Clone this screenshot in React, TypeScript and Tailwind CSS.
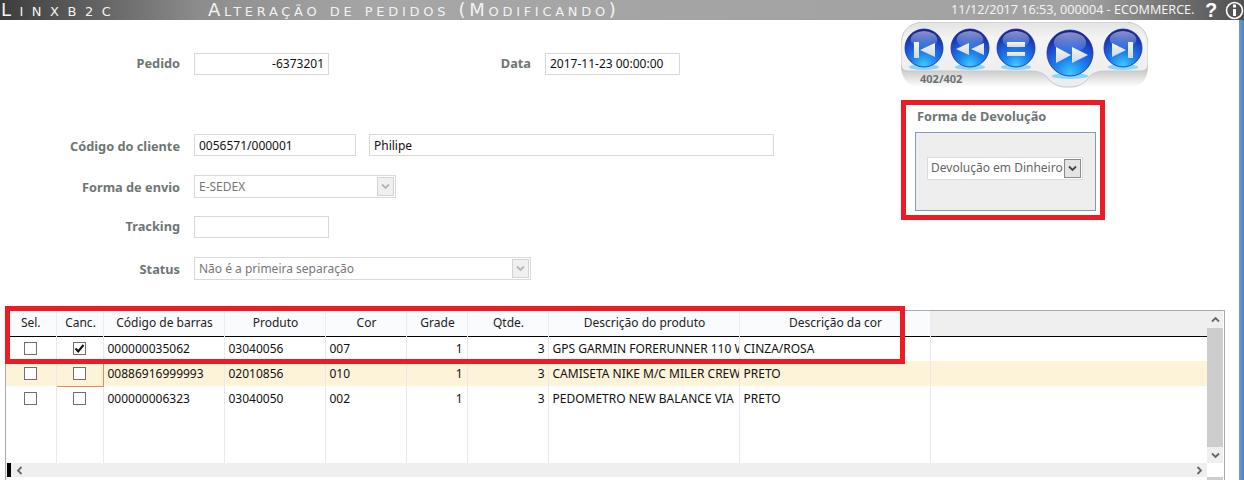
import type { ReactNode } from 'react'

const font = "font-['Noto_Sans','Liberation_Sans',sans-serif]"

type Item = { sel: boolean; barcode: string; product: string; color: string; grade: string; qty: string; name: string; colorName: string }

const items: Item[] = [
  { sel: true, barcode: '000000035062', product: '03040056', color: '007', grade: '1', qty: '3', name: 'GPS GARMIN FORERUNNER 110 WHITE', colorName: 'CINZA/ROSA' },
  { sel: false, barcode: '00886916999993', product: '02010856', color: '010', grade: '1', qty: '3', name: 'CAMISETA NIKE M/C MILER CREW', colorName: 'PRETO' },
  { sel: false, barcode: '000000006323', product: '03040050', color: '002', grade: '1', qty: '3', name: 'PEDOMETRO NEW BALANCE VIA', colorName: 'PRETO' },
]

const headers = ['Sel.', 'Canc.', 'Código de barras', 'Produto', 'Cor', 'Grade', 'Qtde.', 'Descrição do produto', 'Descrição da cor']

function Ball({ cx, cy, r, children }: { cx: number; cy: number; r: number; children: ReactNode }) {
  return (
    <g>
      <ellipse cx={cx} cy={cy + r} rx={r * 0.8} ry={3} fill="#8ad6fa" />
      <circle cx={cx} cy={cy} r={r} fill="url(#ball)" stroke="#1a2f9c" strokeWidth="0.8" />
      <ellipse cx={cx} cy={cy - r * 0.45} rx={r * 0.7} ry={r * 0.45} fill="url(#gloss)" />
      <g fill="url(#glyph)">{children}</g>
    </g>
  )
}

// botões de navegação entre pedidos
function NavWidget() {
  return (
    <svg width="247" height="66" viewBox="0 0 247 66" className="block">
      <defs>
        <radialGradient id="ball" cx="50%" cy="95%" r="90%">
          <stop offset="0%" stopColor="#3fc8fc" />
          <stop offset="35%" stopColor="#1d86ee" />
          <stop offset="70%" stopColor="#1c4fd0" />
          <stop offset="100%" stopColor="#17228f" />
        </radialGradient>
        <linearGradient id="gloss" x1="0" y1="0" x2="0" y2="1">
          <stop offset="0%" stopColor="#ffffff" stopOpacity="0.5" />
          <stop offset="100%" stopColor="#ffffff" stopOpacity="0.05" />
        </linearGradient>
        <linearGradient id="glyph" x1="0" y1="0" x2="0" y2="1">
          <stop offset="0%" stopColor="#f4f4f6" />
          <stop offset="100%" stopColor="#d4d8e0" />
        </linearGradient>
        <linearGradient id="base" x1="0" y1="0" x2="0" y2="1">
          <stop offset="0%" stopColor="#bdbdbd" />
          <stop offset="100%" stopColor="#ffffff" />
        </linearGradient>
        <linearGradient id="panel" x1="0" y1="0" x2="0" y2="1">
          <stop offset="0%" stopColor="#e2e2e2" />
          <stop offset="25%" stopColor="#f4f4f4" />
          <stop offset="100%" stopColor="#ececec" />
        </linearGradient>
      </defs>
      <path d="M0 44 H247 V46 Q246 62 232 65 H15 Q2 62 0 46 Z" fill="url(#base)" />
      <path d="M22 0 H225 Q247 2 247 24 V42 Q247 49 240 49 H202 Q190 50 186 58 Q178 66 168 65 Q156 66 148 58 Q144 50 132 49 H7 Q0 49 0 42 V24 Q0 2 22 0 Z" fill="url(#panel)" stroke="#c9c9c9" strokeWidth="1" />
      <Ball cx={23} cy={26} r={19}>
        <rect x="13" y="20" width="5" height="16" />
        <path d="M19 28 L34 21 V35 Z" />
      </Ball>
      <Ball cx={69} cy={26} r={19}>
        <path d="M55 27 L68 21 V33 Z M70 27 L83 21 V33 Z" />
      </Ball>
      <Ball cx={115} cy={26} r={19}>
        <rect x="106" y="20" width="18" height="5" />
        <rect x="106" y="30" width="18" height="4" />
      </Ball>
      <Ball cx={169} cy={31} r={23}>
        <path d="M155 25 L170 33 L155 41 Z M171 25 L187 33 L171 41 Z" />
      </Ball>
      <Ball cx={222} cy={26} r={19}>
        <path d="M211 21 L225 28 L211 35 Z" />
        <rect x="227" y="20" width="5" height="16" />
      </Ball>
      <text x="19" y="61" fontSize="11" fontWeight="700" fill="#6c7370" className={font}>402/402</text>
    </svg>
  )
}

function Chevron({ up, className }: { up?: boolean; className?: string }) {
  return (
    <svg width="9" height="7" viewBox="0 0 9 7" className={className}>
      <path d={up ? 'M1 5.5 L4.5 2 L8 5.5' : 'M1 1.5 L4.5 5 L8 1.5'} fill="none" stroke="currentColor" strokeWidth="1.8" />
    </svg>
  )
}

function Check({ checked }: { checked?: boolean }) {
  return (
    <span className="flex h-[13px] w-[13px] items-center justify-center border border-[#707070] bg-white">
      {checked && (
        <svg width="11" height="11" viewBox="0 0 11 11">
          <path d="M1.5 5.5 L4.2 8.5 L9.5 2" fill="none" stroke="#111" strokeWidth="2" />
        </svg>
      )}
    </span>
  )
}

function Field({ label, labelClass, children }: { label: string; labelClass?: string; children: ReactNode }) {
  return (
    <div className="flex items-center">
      <label className={`w-[180px] text-right text-[12.75px] font-bold text-[#6e7674] ${labelClass ?? ''}`}>{label}</label>
      <div className="ml-[14px] flex">{children}</div>
    </div>
  )
}

function TextBox({ value, className }: { value: string; className: string }) {
  return (
    <div className={`flex h-[22px] items-center overflow-hidden border border-[#d9d9d9] bg-white px-1 text-[12px] text-[#111] ${className}`}>
      {value}
    </div>
  )
}

function DisabledSelect({ value, className }: { value: string; className: string }) {
  return (
    <div className={`flex h-[23px] items-center justify-between border border-[#d9d9d9] bg-white pl-1 pr-[1px] text-[12px] text-[#777] ${className}`}>
      <span>{value}</span>
      <span className="flex h-[19px] w-[17px] items-center justify-center border border-[#d4d4d4] bg-[#f0f0f0] text-[#b5b5b5]">
        <Chevron />
      </span>
    </div>
  )
}

export default function App() {
  return (
    <div className={`flex h-[480px] w-[1244px] flex-col overflow-hidden bg-white ${font}`}>
      {/* barra de título */}
      <div className="flex h-5 shrink-0 items-center bg-[linear-gradient(90deg,#3c3c3c_0%,#8c8c8c_16%,#a6a6a6_30%,#a2a2a2_87%,#4e4e4e_100%)] text-[#f2f2f2]">
        <span className="w-[208px] pl-[1px] font-['DejaVu_Sans',sans-serif] text-[18px] leading-none tracking-[8.5px] whitespace-nowrap [font-variant-caps:small-caps]">
          Linxb<span className="text-[13px]">2</span>c
        </span>
        <span className="w-[743px] font-['DejaVu_Sans',sans-serif] text-[18px] leading-none tracking-[3.7px] whitespace-nowrap [font-variant-caps:small-caps]">Alteração de pedidos (Modificando)</span>
        <span className="w-[254px] text-[12.6px] whitespace-nowrap">11/12/2017 16:53, 000004 - ECOMMERCE.</span>
        <span className="w-[20px] font-['Liberation_Sans',sans-serif] text-[20px] leading-none font-bold text-white">?</span>
        <svg width="19" height="19" viewBox="0 0 19 19" className="shrink-0">
          <circle cx="9.5" cy="9.5" r="8" fill="none" stroke="#fff" strokeWidth="1.6" />
          <rect x="8" y="8" width="3" height="7" fill="#fff" />
          <rect x="8" y="3.5" width="3" height="3" fill="#fff" />
        </svg>
      </div>

      <div className="flex min-h-0 flex-1">
        <div className="flex w-[1239px] flex-col">
          <div className="flex h-[290px] shrink-0">
            {/* formulário */}
            <div className="flex w-[901px] flex-col pt-[33px]">
              <div className="flex h-[22px] items-center">
                <Field label="Pedido">
                  <TextBox value="-6373201" className="w-[135px] justify-end" />
                </Field>
                <span className="ml-[171px] w-[31px] text-right text-[12.75px] font-bold text-[#6e7674]">Data</span>
                <TextBox value="2017-11-23 00:00:00" className="ml-[14px] w-[135px]" />
              </div>
              <div className="mt-[59px]">
                <Field label="Código do cliente" labelClass="translate-y-[2px]">
                  <TextBox value="0056571/000001" className="w-[162px] pt-[2px]" />
                  <TextBox value="Philipe" className="ml-[13px] w-[405px] pt-[2px]" />
                </Field>
              </div>
              <div className="mt-[19px]">
                <Field label="Forma de envio" labelClass="translate-y-[1px]">
                  <DisabledSelect value="E-SEDEX" className="w-[202px]" />
                </Field>
              </div>
              <div className="mt-[18px]">
                <Field label="Tracking">
                  <TextBox value="" className="w-[135px]" />
                </Field>
              </div>
              <div className="mt-[19px]">
                <Field label="Status" labelClass="translate-y-[1px]">
                  <DisabledSelect value="Não é a primeira separação" className="w-[337px]" />
                </Field>
              </div>
            </div>

            {/* navegação e forma de devolução */}
            <div className="flex flex-col pt-[2px]">
              <NavWidget />
              <div className="mt-3 h-[120px] w-[204px] border-[5px] border-[#ed1c24]">
                <div className="pl-[11px] pt-[3px] text-[12.75px] leading-[17px] font-bold text-[#6e7674]">Forma de Devolução</div>
                <div className="ml-[9px] mt-[7px] flex h-[79px] w-[181px] items-center border border-[#7f9db9] bg-[#eeeeee] pb-[7px] pl-[11px]">
                  <div className="flex h-[23px] w-[156px] items-center justify-between border border-[#dcdcdc] bg-white pl-[3px] pr-[1px] text-[12px] whitespace-nowrap text-[#666]">
                    <span>Devolução em Dinheiro</span>
                    <span className="flex h-[19px] w-[17px] items-center justify-center border border-[#8a8a8a] bg-[#e4e4e4] text-[#444]">
                      <Chevron />
                    </span>
                  </div>
                </div>
              </div>
            </div>
          </div>

          {/* grade de itens */}
          <div className="relative ml-[5px] flex h-[170px] w-[1220px] border border-b-0 border-[#aaaaaa]">
            <div className="flex w-[1201px] flex-col">
              <div className="h-[152px] overflow-hidden">
                <table className="w-[1201px] table-fixed border-collapse text-[12px] text-[#111]">
                  <colgroup>
                    <col className="w-[50px]" />
                    <col className="w-[47px]" />
                    <col className="w-[121px]" />
                    <col className="w-[101px]" />
                    <col className="w-[81px]" />
                    <col className="w-[61px]" />
                    <col className="w-[81px]" />
                    <col className="w-[191px]" />
                    <col className="w-[191px]" />
                    <col />
                  </colgroup>
                  <thead>
                    <tr className="h-[25px] border-b border-black">
                      {headers.map(h => (
                        <th key={h} className="border-r border-[#e6eef8] bg-[#fafbfd] p-0 pl-[2px] font-normal whitespace-nowrap text-[#222] first:pl-0">{h}</th>
                      ))}
                      <th className="bg-[#efefef] p-0" />
                    </tr>
                  </thead>
                  <tbody>
                    {items.map((it, i) => (
                      <tr key={it.barcode} className={i === 1 ? 'h-[25px] bg-[#fdf3d9]' : 'h-[25px]'}>
                        <td className="border-r border-[#e8e8ee] p-0">
                          <div className="flex justify-center"><Check /></div>
                        </td>
                        <td className={i === 1 ? 'border border-[#f08a4b] p-0' : 'border-r border-[#e8e8ee] p-0'}>
                          <div className="flex justify-center"><Check checked={it.sel} /></div>
                        </td>
                        <td className="overflow-hidden border-r border-[#e8e8ee] py-0 pl-1 whitespace-nowrap">{it.barcode}</td>
                        <td className="overflow-hidden border-r border-[#e8e8ee] py-0 pl-1 whitespace-nowrap">{it.product}</td>
                        <td className="border-r border-[#e8e8ee] py-0 pl-1">{it.color}</td>
                        <td className="border-r border-[#e8e8ee] py-0 pr-1 text-right">{it.grade}</td>
                        <td className="border-r border-[#e8e8ee] py-0 pr-[3px] text-right">{it.qty}</td>
                        <td className="overflow-hidden border-r border-[#e8e8ee] py-0 pl-1 whitespace-nowrap">{it.name}</td>
                        <td className="overflow-hidden border-r border-[#e8e8ee] py-0 pl-1 whitespace-nowrap">{it.colorName}</td>
                        <td className="p-0" />
                      </tr>
                    ))}
                    <tr className="h-[60px]">
                      {headers.map(h => (
                        <td key={h} className="border-r border-[#e8e8ee] p-0" />
                      ))}
                      <td className="p-0" />
                    </tr>
                  </tbody>
                </table>
              </div>
              {/* barra de rolagem horizontal */}
              <div className="flex h-[14px] w-[1201px] shrink-0 items-center justify-between bg-[#efefef] pr-[3px] text-[#666]">
                <span className="flex items-center">
                  <span className="mr-[4px] ml-[1px] h-[14px] w-[4px] bg-black" />
                  <Chevron className="rotate-90" />
                </span>
                <Chevron className="-rotate-90" />
              </div>
            </div>
            {/* barra de rolagem vertical */}
            <div className="flex w-[16px] flex-col">
              <div className="flex h-[17px] items-center justify-center bg-[#efefef] text-[#666]"><Chevron up /></div>
              <div className="h-[119px] bg-[#cdcdcd]" />
              <div className="flex h-[16px] items-center justify-center bg-[#efefef] text-[#666]"><Chevron /></div>
              <div className="h-[14px] bg-white" />
              <div className="flex-1 bg-[#cdcdcd]" />
            </div>
            {/* destaque em vermelho sobre a grade */}
            <div className="pointer-events-none absolute top-[-5px] left-[-1px] h-[58px] w-[900px] border-[5px] border-[#ed1c24]" />
          </div>
        </div>
        <div className="w-[5px] bg-[linear-gradient(90deg,#6c9bd6,#4f80c0)]" />
      </div>
    </div>
  )
}
